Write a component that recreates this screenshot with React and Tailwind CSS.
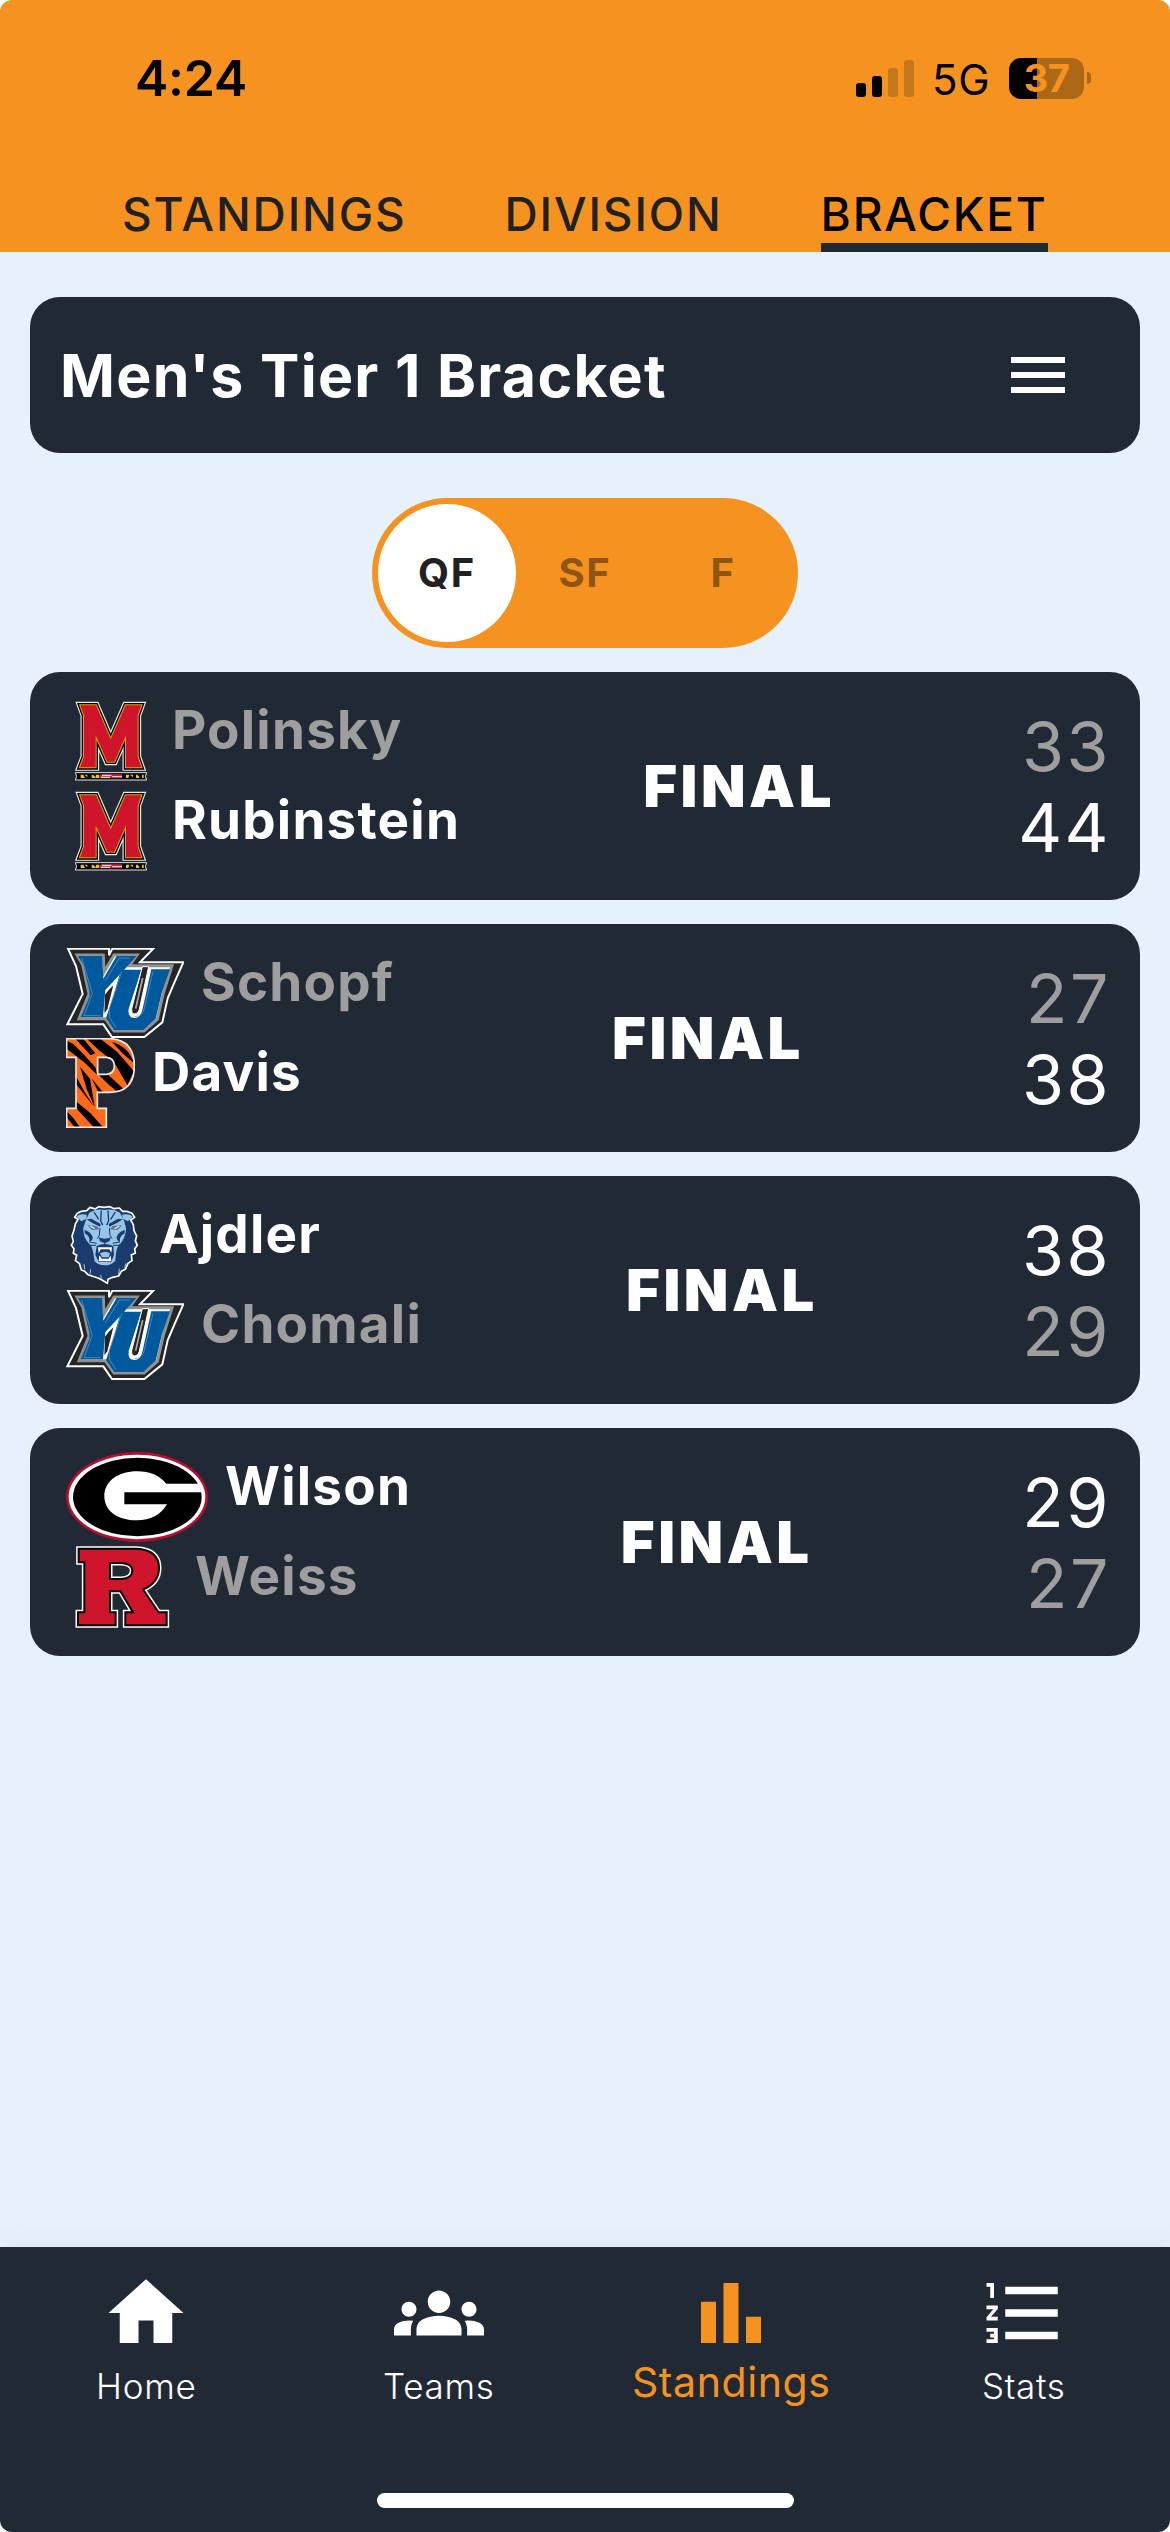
import React from "react";
import { MdHome, MdGroups, MdBarChart, MdFormatListNumbered, MdMenu } from "react-icons/md";

const M_SHAPE =
  "M121 76H168L212 178L257 76H304L293 106V230L304 262H258V166L223 245H202L167 166V262H120L132 230V106Z";

function TerrapinLogo() {
  return (
    <svg viewBox="78 48 267 270" className="h-[90px] w-[89px] shrink-0">
      <path d={M_SHAPE} fill="none" stroke="#e8eaec" strokeWidth="21" />
      <path d={M_SHAPE} fill="none" stroke="#000" strokeWidth="14" />
      <path d={M_SHAPE} fill="none" stroke="#e0a400" strokeWidth="6" />
      <path d={M_SHAPE} fill="#ce152c" />
      <path d="M106 278H320L316 289L320 300H106L110 289Z" fill="#000" stroke="#e4e6e8" strokeWidth="3" />
      <path d="M122 284h8l5 10h-13zM134 284h8v8zM155 284h4l6 6v4h-10zM168 284h10v10h-12zM258 284h10l-3 10h-7zM270 284h9v8zM288 284h4l6 6v4h-10zM306 284h5v10h-5z" fill="#f0c419" />
      <path d="M184 283H246V295H184L178 289Z" fill="#d5203a" />
      <path d="M186 286H214M216 290H246M182 292H210" stroke="#fff" strokeWidth="3" />
    </svg>
  );
}

const YU_OUTER =
  "M84 56H207V76L217 56H340L300 97H430L403 158L383 205L367 277L313 321H216L190 283H82L128 192L108 108Z";
const YU_FACE =
  "M111 75H190L192 126L222 75H291L268 107H396L371 186L352 268L312 303H222L196 266H117L147 192L128 104Z";

function YuLogo() {
  return (
    <svg viewBox="78 54 354 270" className="h-[90px] w-[118px] shrink-0">
      <path d={YU_OUTER} fill="#262526" stroke="#fff" strokeWidth="6" />
      <path d={YU_FACE} fill="#fff" stroke="#8f9193" strokeWidth="9" />
      <path d="M114 78H186L190 146L230 78H289L252 120L196 180L189 262H122L149 198L148 182L130 104Z" fill="#00589d" />
      <path d="M243 119H304L266 236Q262 264 284 264Q301 264 307 240L334 118H390L366 186L347 266L310 300H223L198 264L222 192Z" fill="#00589d" />
      <path d="M208 178L220 166L202 238L193 250L195 194Z" fill="#262526" />
      <path d="M307 110H326L298 238Q294 252 282 252Q273 250 275 236Z" fill="#262526" stroke="#fff" strokeWidth="3" />
      <path d="M308 144L287 236" stroke="#a9abad" strokeWidth="5" />
      <path d="M125 84L157 190L132 257H182M196 152L238 84H270M245 124L208 236V262L228 293M339 124L312 238Q306 259 284 260" fill="none" stroke="#6d9fcb" strokeWidth="2" />
    </svg>
  );
}

const P_SHAPE =
  "M80 326H214Q283 332 283 408Q283 487 208 487H172V535H199V592H80V535H108V382H80ZM173 382V433H199Q223 431 223 408Q223 384 199 382Z";

function TigerPLogo() {
  return (
    <svg viewBox="78 324 207 270" className="h-[90px] w-[69px] shrink-0">
      <clipPath id="tiger-p">
        <path d={P_SHAPE} clipRule="evenodd" />
      </clipPath>
      <g clipPath="url(#tiger-p)">
        <rect x="78" y="324" width="207" height="270" fill="#ff6a1a" />
        <path
          d="M80 332L100 342L132 374L166 412L172 436L136 400L80 356ZM104 324H128L166 370L152 376ZM138 324H178L232 366L282 424L262 466L222 396L176 360ZM216 336Q266 350 282 400L246 368ZM176 434L204 434L252 478L236 488L208 466ZM120 410L150 446L164 530L140 478ZM108 438L134 486L162 530L108 462ZM154 444L190 488H176ZM108 514L150 548L188 590H160L108 534ZM80 544L100 564L120 592H104L80 562Z"
          fill="#000"
        />
      </g>
      <path d={P_SHAPE} fill="none" stroke="#f1e9e4" strokeWidth="5" />
    </svg>
  );
}

function LionLogo() {
  return (
    <svg viewBox="0 0 228 270" className="h-[90px] w-[76px] shrink-0">
      <path
        d="M115 22L98 20L88 27L72 22L62 32L46 34L34 40L26 52L36 58L28 72L24 90L18 108L22 124L16 136L24 146L22 160L32 166L28 182L40 190L46 210L56 214L66 224L84 230L96 234L108 240L124 250L126 238L140 232L158 228L166 214L178 208L186 190L198 182L196 164L208 160L206 146L214 136L208 122L212 108L204 92L202 74L194 60L206 52L198 40L182 34L170 34L160 24L144 26L132 20Z"
        fill="#1b3b6f"
        stroke="#fff"
        strokeWidth="5"
        strokeLinejoin="round"
      />
      <path d="M62 44Q40 40 32 50L46 64L62 56ZM168 44Q190 40 200 50L186 64L170 56Z" fill="#96c5e9" />
      <path d="M70 38Q92 24 115 30Q140 24 162 38L174 62L180 84Q180 110 164 130Q152 140 150 160L148 182Q136 196 116 196Q96 196 86 184L82 160Q80 140 68 130Q50 110 52 84L60 60Z" fill="#96c5e9" />
      <path d="M106 32L104 62L110 76M126 32L128 62L122 76M84 36L98 58M148 36L134 58" fill="none" stroke="#1b3b6f" strokeWidth="4" />
      <path d="M62 58L76 56L104 72L102 80L78 68ZM170 58L156 56L128 72L130 80L154 68Z" fill="#1b3b6f" />
      <path d="M64 76L92 78L100 88L78 90ZM168 76L140 78L132 88L154 90Z" fill="#5a7187" />
      <path d="M72 78L86 86M160 78L146 86" stroke="#dfe6ea" strokeWidth="4" />
      <path d="M56 90Q72 94 80 110Q82 120 70 126Q74 110 56 100ZM176 90Q160 94 152 110Q150 120 162 126Q158 110 176 100Z" fill="#1b3b6f" />
      <path d="M102 84L100 106L94 116M130 84L132 106L138 116" fill="none" stroke="#1b3b6f" strokeWidth="3" />
      <path d="M98 112Q116 120 134 112L130 124L116 130L102 124Z" fill="#1b3b6f" />
      <path d="M116 128V140M70 126L92 130M66 136L90 136M162 126L140 130M166 136L142 136" stroke="#1b3b6f" strokeWidth="3" />
      <path d="M92 138Q116 126 142 138L144 164L136 186H98L88 164Z" fill="#1b3b6f" />
      <path d="M96 142H138L136 158L130 148H104L98 160ZM98 184L100 166L108 176H128L134 166L136 184Z" fill="#fff" />
      <path d="M102 160Q118 150 132 160L128 172H108Z" fill="#96c5e9" />
      <path d="M74 208L72 222M160 206L158 224M104 224L106 236M54 192L56 208M180 190L176 204" stroke="#fff" strokeWidth="2" />
    </svg>
  );
}

function GLogo() {
  return (
    <svg viewBox="78 66 426 270" className="h-[90px] w-[142px] shrink-0">
      <ellipse cx="291" cy="201" rx="213" ry="135" fill="#ba0c2f" />
      <ellipse cx="291" cy="201" rx="205" ry="127" fill="#fff" />
      <ellipse cx="292" cy="201" rx="193" ry="118" fill="#000" />
      <path d="M379 161H476L488 187H253V223H381C362 255 332 271 290 271C232 271 193 242 193 198C193 154 234 124 292 124C330 124 358 136 379 161Z" fill="#fff" />
    </svg>
  );
}

const R_SHAPE =
  "M119 359H288Q354 362 354 414Q354 458 305 477L354 550H377V583H259V550H284L243 481H207V550H224V583H117V550H136V394H119ZM207 396V450H244Q280 447 280 422Q280 398 244 396Z";

function RLogo() {
  return (
    <svg viewBox="78 336 336 270" className="h-[90px] w-[112px] shrink-0">
      <path d={R_SHAPE} fill="none" stroke="#fff" strokeWidth="21" />
      <path d={R_SHAPE} fill="none" stroke="#000" strokeWidth="12" />
      <path d={R_SHAPE} fill="#ce152c" fillRule="evenodd" />
    </svg>
  );
}

const MATCHES = [
  [
    { logo: TerrapinLogo, name: "Polinsky", score: 33 },
    { logo: TerrapinLogo, name: "Rubinstein", score: 44, won: true },
  ],
  [
    { logo: YuLogo, name: "Schopf", score: 27 },
    { logo: TigerPLogo, name: "Davis", score: 38, won: true },
  ],
  [
    { logo: LionLogo, name: "Ajdler", score: 38, won: true },
    { logo: YuLogo, name: "Chomali", score: 29 },
  ],
  [
    { logo: GLogo, name: "Wilson", score: 29, won: true },
    { logo: RLogo, name: "Weiss", score: 27 },
  ],
];

function StatusBar() {
  return (
    <div className="flex h-[156px] items-center justify-between pr-[79px] pl-[135px] text-black">
      <div className="text-[50px] leading-none font-semibold tracking-[-0.2px]">4:24</div>
      <div className="flex items-center">
        <div className="flex h-[37px] items-end gap-1.5">
          <div className="h-[14px] w-[10px] rounded-[3px] bg-black" />
          <div className="h-[21px] w-[10px] rounded-[3px] bg-black" />
          <div className="h-[29px] w-[10px] rounded-[3px] bg-[#c4781c]" />
          <div className="h-[37px] w-[10px] rounded-[3px] bg-[#c4781c]" />
        </div>
        <div className="ml-[18px] w-[59px] pt-[3px] text-[42px] leading-none tracking-[0.7px]">5G</div>
        <div className="ml-[18px] flex h-[41px] w-[75px] items-center justify-center rounded-[12px] bg-[linear-gradient(to_right,#000_28px,#ad6817_28px)] text-[38px] leading-none font-bold tracking-[-0.5px] text-[#f69320]">
          37
        </div>
        <div className="ml-[3px] h-[12px] w-[4px] rounded-r-full bg-[#ad6817]" />
      </div>
    </div>
  );
}

function Tabs() {
  const base = "flex h-full items-center border-b-[9px] pt-[29px]";
  return (
    <div className="flex h-[96px] gap-[98px] pl-[122px] text-[46px] leading-none font-medium tracking-[1.86px]">
      <div className={`${base} border-transparent text-[#212121]`}>STANDINGS</div>
      <div className={`${base} border-transparent text-[#212121]`}>DIVISION</div>
      <div className={`${base} border-[#212a34] text-black`}>BRACKET</div>
    </div>
  );
}

function Match({ teams }) {
  return (
    <div className="flex h-[228px] items-center justify-between rounded-[30px] bg-[#212a34] pr-[29px] pl-9">
      <div>
        {teams.map(({ logo: Logo, name, won }) => (
          <div key={name} className="flex h-[90px] gap-[17px]">
            <Logo />
            <div className={`text-[53px] leading-[68px] font-[650] tracking-[1.2px] ${won ? "text-white" : "text-[#9e9e9e]"}`}>
              {name}
            </div>
          </div>
        ))}
      </div>
      <div className="text-[58px] leading-none font-black tracking-[3.5px] text-white">FINAL</div>
      <div className="pt-[2px] text-right text-[68px] leading-[81px] tracking-[2.5px]">
        {teams.map(({ name, score, won }) => (
          <div key={name} className={won ? "text-white" : "text-[#9e9e9e]"}>{score}</div>
        ))}
      </div>
    </div>
  );
}

function NavItem({ icon: Icon, label, active }) {
  return (
    <div className={`flex flex-1 flex-col items-center ${active ? "text-[#f69320]" : "text-white"}`}>
      <Icon className="size-[90px]" />
      <div className={active ? "text-[41px] leading-[49px] tracking-[0.6px]" : "text-[35px] leading-[57px] font-light tracking-[0.7px]"}>
        {label}
      </div>
    </div>
  );
}

export default function App() {
  return (
    <div className="h-[2532px] w-[1170px] bg-white font-['Inter',sans-serif]">
      <div className="flex h-full flex-col overflow-hidden rounded-[12px] bg-[#e6f1fb]">
        <header className="h-[252px] bg-[#f69320]">
          <StatusBar />
          <Tabs />
        </header>

        <main className="flex-1 px-[30px] pt-[45px]">
          <div className="flex h-[156px] items-center justify-between rounded-[30px] bg-[#212a34] pr-[66px] pl-[30px] text-white">
            <h1 className="text-[59px] leading-none font-[650] tracking-[1.3px]">Men's Tier 1 Bracket</h1>
            <MdMenu className="size-[72px]" />
          </div>

          <div className="mx-auto mt-[45px] flex h-[150px] w-[426px] rounded-full bg-[#f69320] p-1.5 text-[40px] leading-none font-[650] tracking-[1.6px] text-[#8f5514]">
            <div className="flex flex-1 items-center justify-center rounded-full bg-white text-[#212121]">QF</div>
            <div className="flex flex-1 items-center justify-center">SF</div>
            <div className="flex flex-1 items-center justify-center">F</div>
          </div>

          <div className="mt-6 flex flex-col gap-6">
            {MATCHES.map((teams) => (
              <Match key={teams[0].name} teams={teams} />
            ))}
          </div>
        </main>

        <nav className="flex h-[285px] flex-col items-center justify-between bg-[#212a34] pt-[21px] pb-6 shadow-[0_-4px_24px_rgba(0,0,0,0.05)]">
          <div className="flex w-full">
            <NavItem icon={MdHome} label="Home" />
            <NavItem icon={MdGroups} label="Teams" />
            <NavItem icon={MdBarChart} label="Standings" active />
            <NavItem icon={MdFormatListNumbered} label="Stats" />
          </div>
          <div className="h-[15px] w-[417px] rounded-full bg-white" />
        </nav>
      </div>
    </div>
  );
}
